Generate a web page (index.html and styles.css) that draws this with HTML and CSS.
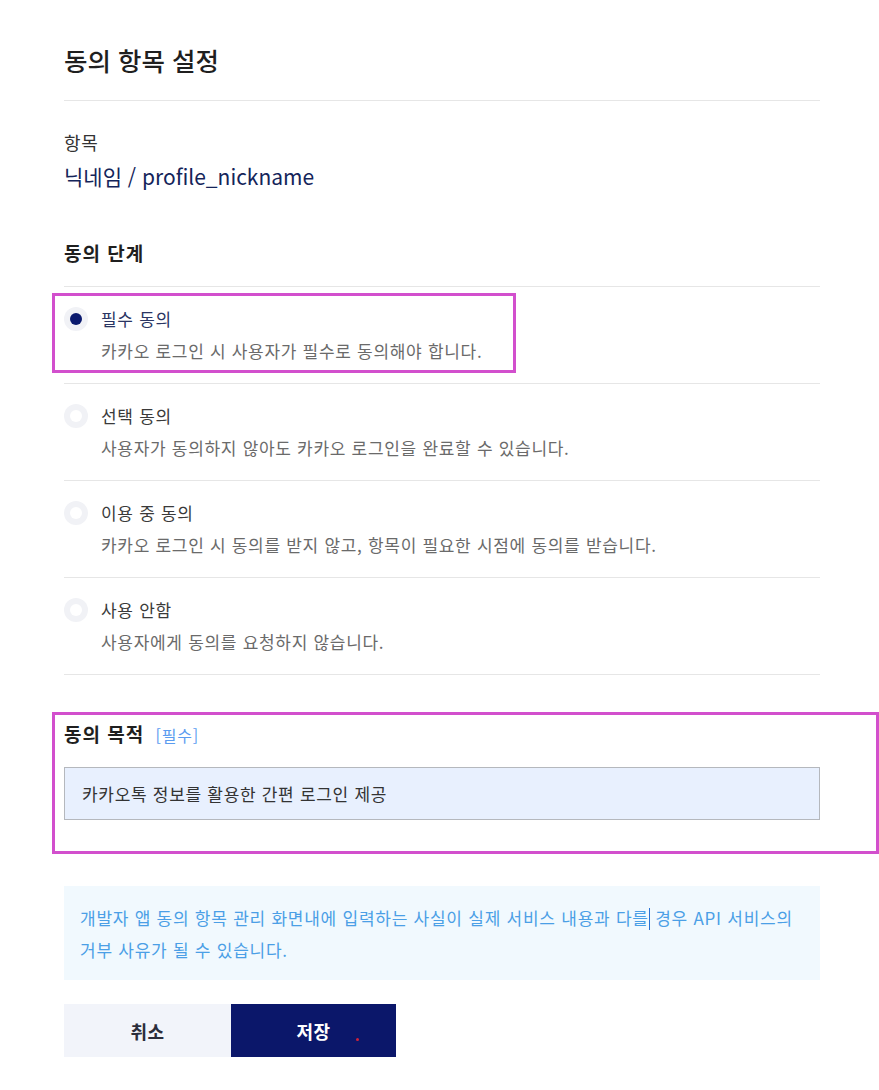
FILE: index.html
```html
<!DOCTYPE html>
<html lang="ko">
<head>
<meta charset="utf-8">
<title>동의 항목 설정</title>
<link rel="stylesheet" href="styles.css">
</head>
<body>
<main class="page">
  <h1 class="title">동의 항목 설정</h1>

  <section class="item">
    <div class="item-label">항목</div>
    <div class="item-value">닉네임 / profile_nickname</div>
  </section>

  <h2 class="section-title">동의 단계</h2>

  <ul class="options">
    <li class="option selected">
      <span class="radio"><span class="radio-dot"></span></span>
      <div class="option-text">
        <div class="option-label">필수 동의</div>
        <div class="option-desc">카카오 로그인 시 사용자가 필수로 동의해야 합니다.</div>
      </div>
      <span class="highlight highlight-option"></span>
    </li>
    <li class="option">
      <span class="radio"><span class="radio-dot"></span></span>
      <div class="option-text">
        <div class="option-label">선택 동의</div>
        <div class="option-desc">사용자가 동의하지 않아도 카카오 로그인을 완료할 수 있습니다.</div>
      </div>
    </li>
    <li class="option">
      <span class="radio"><span class="radio-dot"></span></span>
      <div class="option-text">
        <div class="option-label">이용 중 동의</div>
        <div class="option-desc">카카오 로그인 시 동의를 받지 않고, 항목이 필요한 시점에 동의를 받습니다.</div>
      </div>
    </li>
    <li class="option">
      <span class="radio"><span class="radio-dot"></span></span>
      <div class="option-text">
        <div class="option-label">사용 안함</div>
        <div class="option-desc">사용자에게 동의를 요청하지 않습니다.</div>
      </div>
    </li>
  </ul>

  <section class="purpose">
    <h2 class="section-title purpose-title">동의 목적 <span class="required">[필수]</span></h2>
    <div class="purpose-input">카카오톡 정보를 활용한 간편 로그인 제공</div>
    <span class="highlight highlight-purpose"></span>
  </section>

  <p class="notice">개발자 앱 동의 항목 관리 화면내에 입력하는 사실이 실제 서비스 내용과 다를<span class="caret"></span> 경우 API 서비스의 거부 사유가 될 수 있습니다.</p>

  <div class="buttons">
    <button class="btn btn-cancel">취소</button>
    <button class="btn btn-save">저장<span class="dot"></span></button>
  </div>
</main>
</body>
</html>
```

FILE: styles.css
```css
* { box-sizing: border-box; }

html, body {
  margin: 0;
  padding: 0;
  background: #ffffff;
}

body {
  font-family: "Noto Sans CJK KR", "Noto Sans", sans-serif;
  color: #333333;
}

.page {
  width: 820px;
  padding: 44px 0 0 64px;
}

.title {
  margin: 0;
  font-size: 25.5px;
  line-height: 32px;
  font-weight: 500;
  color: #1f1f1f;
  padding-bottom: 24px;
  border-bottom: 1px solid #e6e6e6;
}

.item {
  padding-top: 29px;
}

.item-label {
  font-size: 18px;
  line-height: 24px;
  letter-spacing: 0.8px;
  color: #333333;
}

.item-value {
  margin-top: 8px;
  font-size: 21px;
  line-height: 28px;
  font-weight: 400;
  color: #14245a;
}

.section-title {
  margin: 50px 0 0;
  font-size: 19px;
  line-height: 26px;
  font-weight: 700;
  letter-spacing: 1px;
  color: #1f1f1f;
  padding-bottom: 20px;
  border-bottom: 1px solid #e6e6e6;
}

.options {
  list-style: none;
  margin: 0;
  padding: 0;
}

.option {
  position: relative;
  display: flex;
  align-items: flex-start;
  gap: 13px;
  padding: 20px 0 20px;
  border-bottom: 1px solid #e6e6e6;
}

.radio {
  flex: none;
  width: 24px;
  height: 24px;
  border-radius: 50%;
  background: #f1f2f6;
  display: flex;
  align-items: center;
  justify-content: center;
}

.radio-dot {
  width: 12px;
  height: 12px;
  border-radius: 50%;
  background: #ffffff;
}

.selected .radio-dot {
  background: #0b1a6e;
}

.option-label {
  font-size: 17px;
  line-height: 24px;
  letter-spacing: 0.7px;
  color: #3a3a3a;
}

.selected .option-label {
  color: #2a3563;
}

.option-desc {
  margin-top: 8px;
  font-size: 17px;
  line-height: 24px;
  letter-spacing: 0.7px;
  color: #6a6a6a;
}

.highlight {
  position: absolute;
  border: 3px solid #d24fcd;
  pointer-events: none;
}

.highlight-option {
  left: -12px;
  top: 6px;
  width: 464px;
  height: 80px;
}

.purpose {
  position: relative;
  padding-top: 46px;
}

.purpose-title {
  margin: 0;
  padding-bottom: 0;
  border-bottom: none;
}

.required {
  margin-left: 5px;
  font-size: 16px;
  font-weight: 400;
  letter-spacing: 0.8px;
  color: #5b9cf0;
}

.purpose-input {
  margin-top: 19px;
  height: 53px;
  padding: 0 17px;
  display: flex;
  align-items: center;
  background: #e8f0fe;
  border: 1px solid #b5b8bd;
  font-size: 17px;
  letter-spacing: 0.7px;
  color: #333333;
}

.highlight-purpose {
  left: -12px;
  top: 37px;
  width: 827px;
  height: 142px;
}

.notice {
  margin: 66px 0 0;
  padding: 16px 16px 14px;
  background: #f1f9fe;
  font-size: 17px;
  line-height: 32px;
  letter-spacing: 0.75px;
  color: #4b9fe6;
}

.caret {
  display: inline-block;
  width: 1px;
  height: 22px;
  vertical-align: -5px;
  background: #2a72d4;
}

.buttons {
  display: flex;
  margin-top: 24px;
}

.btn {
  position: relative;
  height: 53px;
  border: none;
  font-family: inherit;
  font-size: 18px;
  font-weight: 700;
  letter-spacing: 0.5px;
  cursor: pointer;
}

.btn-cancel {
  width: 167px;
  background: #f2f4fa;
  color: #2b2d3b;
}

.btn-save {
  width: 165px;
  background: #0b176a;
  color: #ffffff;
}

.dot {
  position: absolute;
  left: 125px;
  top: 34px;
  width: 3px;
  height: 3px;
  border-radius: 50%;
  background: #d2223a;
}
```
